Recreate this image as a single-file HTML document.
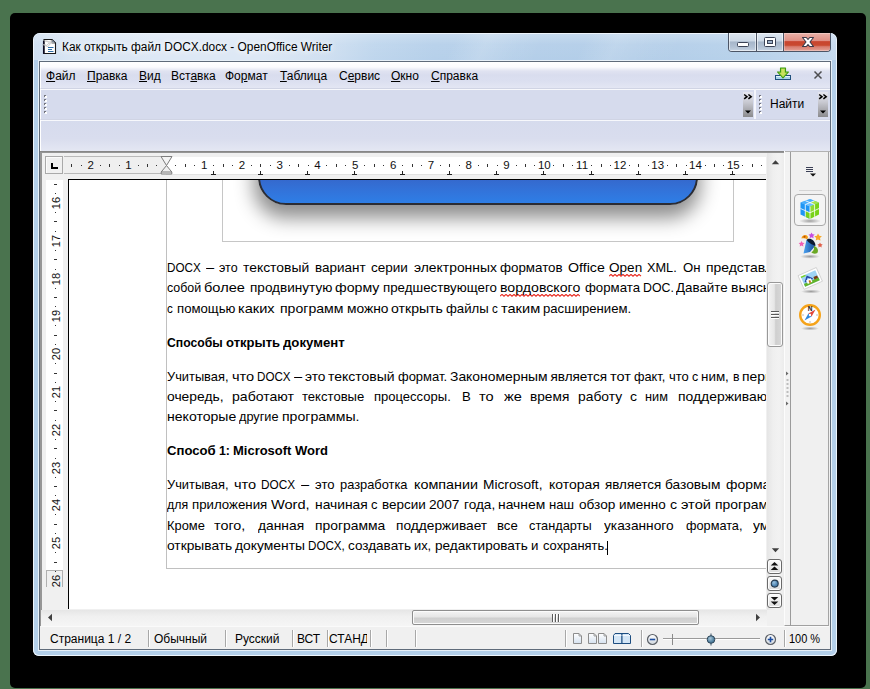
<!DOCTYPE html>
<html lang="ru">
<head>
<meta charset="utf-8">
<title>OpenOffice Writer</title>
<style>
*{box-sizing:border-box;margin:0;padding:0}
html,body{width:870px;height:689px;overflow:hidden}
body{position:relative;background:#4a734e;font-family:"Liberation Sans",sans-serif;font-size:12px;color:#000}
.a{position:absolute}
i{font-style:normal}
#shadow{left:10px;top:13px;width:856px;height:675px;background:#000;border-radius:5px}
#win{left:33px;top:33px;width:804px;height:623px;border-radius:7px 7px 6px 6px;
 background:#b3cfea;
 box-shadow:inset 0 0 0 1px #eef5fc}
#tbar{left:34px;top:34px;width:802px;height:26px;border-radius:6px 6px 0 0;overflow:hidden;
 background:linear-gradient(115deg,rgba(255,255,255,0) 52%,rgba(255,255,255,.16) 56%,rgba(255,255,255,.05) 60%,rgba(255,255,255,0) 63%,rgba(255,255,255,0) 68%,rgba(255,255,255,.14) 72%,rgba(255,255,255,.04) 77%,rgba(255,255,255,0) 80%),
 linear-gradient(90deg,#cfdff1 0,#d8e5f3 36px,#dde8f5 120px,#dde8f5 230px,#d0e0f1 290px,#bfd6ed 340px,#b6d0ea 400px,#b2cde8 600px,#b8d2eb 720px,#c6daef 802px)}
#tbar:after{content:"";position:absolute;left:0;top:0;right:0;bottom:0;background:linear-gradient(180deg,rgba(255,255,255,.25) 0,rgba(255,255,255,.05) 40%,rgba(255,255,255,0) 100%)}
#title{left:62px;top:40px;font-size:12px;line-height:14px;white-space:nowrap;color:#000;text-shadow:0 0 6px #fff,0 0 8px #fff;transform-origin:0 0;transform:scaleX(.99)}
#client{left:39px;top:61px;width:792px;height:589px;background:#f0f0f0;border:1px solid #5f6b7a;box-shadow:0 0 0 1px rgba(236,243,250,.9)}
/* menubar */
#menubar{left:40px;top:62px;width:790px;height:26px;background:linear-gradient(180deg,#ffffff 0,#fbfbfe 5px,#e0e3f1 9px,#d9ddee 13px,#dbdff0 19px,#e3e6f3 26px);border-left:1px solid #fff}
.mi{top:69px;font-size:12px;line-height:14px;white-space:nowrap}
.mi u{text-decoration:underline;text-underline-offset:1px}
#tb1{left:40px;top:88px;width:790px;height:31px;background:#d6dbed;border-top:1px solid #d0d4e4;border-left:1px solid #fff;box-shadow:inset 0 1px 0 #f7f8fc}
#tb2{left:40px;top:119px;width:790px;height:32px;background:linear-gradient(180deg,#d6dbed 0,#d9ddee 60%,#e4e7f3 100%);border-top:1px solid #d0d4e4;border-left:1px solid #fff;box-shadow:inset 0 1px 0 #f7f8fc}
#tbline{left:40px;top:151px;width:744px;height:2px;background:linear-gradient(180deg,#808080,#9c9c9c)}
#tbline2{left:784px;top:151px;width:46px;height:1px;background:#b2b2b2;border-left:1px solid #fff}
/* doc area */
#docarea{left:40px;top:153px;width:744px;height:473px;background:#f0f0f0;border-left:2px solid #969696}
#rcorner{left:45px;top:156px;width:18px;height:18px;border:1px solid #a9a9a9;background:#f0f0f0;box-shadow:inset 1px 1px 0 #fbfbfb}
#rcorner:before{content:"";position:absolute;left:5px;top:6px;width:2px;height:6px;background:#000}
#rcorner:after{content:"";position:absolute;left:5px;top:10px;width:7px;height:2px;background:#000}
#hruler{left:64px;top:156px;width:702px;height:19px;overflow:hidden}
#hruler .white{left:102px;top:1px;width:601px;height:18px;background:#fff;border-bottom:1px solid #e2e2e2}
#hruler .gray{left:0;top:0;width:102px;height:18px;background:#efefef;border-top:1px solid #b9b9b9;border-bottom:1px solid #b9b9b9}
.rn{position:absolute;top:2px;width:20px;text-align:center;font-size:11.5px;line-height:13px;color:#111}
.tk{position:absolute;top:7px;width:1px;height:3px;background:#333}
.dt{position:absolute;top:8px;width:1px;height:1px;background:#333}
.tb{position:absolute;top:14px;width:7px;height:5px}
.tb:before{content:"";position:absolute;left:3px;top:0;width:1px;height:3px;background:#222}
.tb:after{content:"";position:absolute;left:1px;top:3px;width:5px;height:1px;background:#222}
#vruler{left:46px;top:180px;width:17px;height:407px;background:#fff;overflow:hidden}
.vn{position:absolute;left:0px;color:#111;width:20px;height:20px;line-height:20px;text-align:center;font-size:11px;transform:rotate(-90deg)}
.vtk{position:absolute;left:8px;width:3px;height:1px;background:#333}
.vdt{position:absolute;left:9px;width:1px;height:1px;background:#333}
#page{left:68px;top:179px;width:698px;height:430px;background:#fff;border-left:1px solid #000;border-top:1px solid #000;overflow:hidden}
.wd{position:absolute;height:20px;line-height:20px;font-size:13.5px;white-space:nowrap;color:#000;transform-origin:0 50%}
.wd.b{font-weight:bold}
u.w{text-decoration:underline wavy #e02020;text-decoration-thickness:1px;text-underline-offset:2px}

/* doc image */
#frame{left:222px;top:150px;width:512px;height:92px;border:1px solid #c6c6c6}
#shape{left:258px;top:120px;width:440px;height:85px;border-radius:0 0 28px 28px;border:2px solid #2b2c33;
 background:linear-gradient(180deg,#3861c5 0,#3568cc 70%,#3274db 86%,#2e7ee6 100%);
 box-shadow:-1px 10px 19px 3px rgba(0,0,0,.45)}
#txb-l{left:166px;top:180px;width:1px;height:388px;background:#c0c0c0}
#txb-b{left:166px;top:568px;width:600px;height:1px;background:#c0c0c0}
#caret{left:607px;top:541px;width:1px;height:14px;background:#000}
/* scrollbars */
#vsb{left:767px;top:153px;width:17px;height:457px;background:linear-gradient(90deg,#e5e5e5 0,#efefef 35%,#f2f2f2 70%,#ececec 100%)}
#vthumb{left:767px;top:282px;width:16px;height:65px;border:1px solid #989898;border-radius:3px;
 background:linear-gradient(90deg,#f4f4f4 0,#e6e6e6 45%,#cfcfcf 55%,#d8d8d8 100%);box-shadow:inset 0 0 0 1px #fbfbfb}
.grip-h{left:771px;width:8px;height:1px;background:#5a5a5a;box-shadow:0 1px 0 #fff}
#hsb{left:41px;top:610px;width:726px;height:16px;background:linear-gradient(180deg,#e6e6e6 0,#f0f0f0 40%,#f5f5f5 100%)}
#hthumb{left:412px;top:610px;width:287px;height:15px;border:1px solid #8e8e8e;border-radius:2px;
 background:linear-gradient(180deg,#f4f4f4 0,#e6e6e6 45%,#cfcfcf 55%,#d8d8d8 100%);box-shadow:inset 0 0 0 1px #fbfbfb}
.grip-v{top:614px;width:1px;height:8px;background:#5a5a5a;box-shadow:1px 0 0 #fff}
.navb{left:767px;width:15px;height:15px;border:1px solid #6a6a6a;border-radius:3px;background:linear-gradient(180deg,#fbfbfb,#dcdcdc);box-shadow:inset 0 0 0 1px #fdfdfd}
/* sidebar */
#split{left:784px;top:152px;width:6px;height:474px;background:#f2f2f2;border-left:1px solid #fcfcfc;border-bottom:1px solid #a0a0a0}
#sbline{left:790px;top:152px;width:1px;height:474px;background:#9b9b9b}
#sidebar{left:791px;top:152px;width:38px;height:474px;background:#f0f0f0;border-right:1px solid #a4a4a4;border-bottom:1px solid #a0a0a0}
#sbsep{left:799px;top:190px;width:23px;height:1px;background:#d4d4d4}
#sbbtn{left:794px;top:194px;width:32px;height:32px;border:1px solid #a9a9a9;border-radius:4px;background:#f4f4f4}
/* status bar */
#status{left:41px;top:626px;width:788px;height:23px;background:#f0f0f0;border-top:1px solid #fafafa}
.st{top:632px;font-size:12px;line-height:14px;white-space:nowrap;color:#000}
.ss{top:630px;width:1px;height:17px;background:#a8a8a8;box-shadow:1px 0 0 #fff}

/* titlebar buttons */
#capbtns{left:728px;top:33px;width:103px;height:19px;border:1px solid #4c5566;border-top:none;border-radius:0 0 4px 4px;overflow:hidden;background:#c8d4e2}
.cb{top:0;height:18px;background:linear-gradient(180deg,#dde6f0 0,#cdd9e6 44%,#a6b6ca 50%,#b4c3d5 80%,#c6d3e2 100%);box-shadow:inset 0 0 0 1px rgba(255,255,255,.55)}
#cb-close{background:linear-gradient(180deg,#eab1a8 0,#df9085 42%,#c8452f 48%,#c9492f 68%,#d77c6e 76%,#e4a398 100%);box-shadow:inset 0 0 0 1px rgba(255,255,255,.3)}
.cbs{top:0;width:1px;height:18px;background:#4c5566}
/* toolbar bits */
.chev{top:92px;width:10px;height:25px;background:linear-gradient(180deg,#e6e7f0 0,#c9cad2 40%,#8b8b8d 100%)}
.grip{width:4px;height:20px;top:95px}
.grip i{position:absolute;left:1px;width:2px;height:2px;background:#fff;box-shadow:-1px -1px 0 #75767f}
#find{left:770px;top:96.5px;font-size:12px;line-height:14px;white-space:nowrap}
#tbsep{left:754px;top:89px;width:2px;height:30px;background:#f4f5fb}
</style>
</head>
<body>
<div id="shadow" class="a"></div>
<div id="win" class="a"></div>
<div id="tbar" class="a"></div>
<div id="title" class="a">Как открыть файл DOCX.docx - OpenOffice Writer</div>
<div id="client" class="a"></div>
<div id="menubar" class="a"></div>
<div class="a mi" style="left:46px"><u>Ф</u>айл</div>
<div class="a mi" style="left:87px"><u>П</u>равка</div>
<div class="a mi" style="left:139px"><u>В</u>ид</div>
<div class="a mi" style="left:171px">Вст<u>а</u>вка</div>
<div class="a mi" style="left:225px">Фо<u>р</u>мат</div>
<div class="a mi" style="left:280px"><u>Т</u>аблица</div>
<div class="a mi" style="left:339px">С<u>е</u>рвис</div>
<div class="a mi" style="left:391px"><u>О</u>кно</div>
<div class="a mi" style="left:431px"><u>С</u>правка</div>
<div id="tb1" class="a"></div>
<div id="tb2" class="a"></div>
<div id="tbline" class="a"></div><div id="tbline2" class="a"></div>

<!-- title icon -->
<svg class="a" style="left:42px;top:38px" width="16" height="17" viewBox="0 0 16 17">
 <path d="M2 1.500 H10 L13.500 5 V15.500 H2 Z" fill="#fff" stroke="#1a1a1a" stroke-width="1.100"/>
 <path d="M1.700 3 V15.900" stroke="#0a0a24" stroke-width="1.500"/>
 <path d="M10 1.500 L13.500 5 H10 Z" fill="#9bb7d4" stroke="#222" stroke-width=".7"/>
 <path d="M6 9.500 H11.500 M6 11.500 H10 M6 13.500 H11.500" stroke="#2f6ea5" stroke-width="1"/>
 <path d="M0.500 6.800 C2.500 6 3.800 7 4.800 7.400 C6 5 9 4 12.300 4.500 C9 5 7.300 6.300 5.800 8.800 C4.300 7.800 2.500 7.300 0.500 6.800 Z" fill="#f6f6f6" stroke="#9a9a9a" stroke-width=".45"/>
 <path d="M2.500 3 C4.300 2.500 6 3.200 7 3.800 C8 2.800 9.300 2.500 10.800 2.700 C9.500 3 8.400 3.800 7.600 4.800 C6 3.800 4.300 3.200 2.500 3 Z" fill="#f6f6f6" stroke="#a5a5a5" stroke-width=".4"/>
</svg>
<!-- caption buttons -->
<div id="capbtns" class="a">
 <div class="a cb" style="left:0;width:27px"></div>
 <div class="a cbs" style="left:27px"></div>
 <div class="a cb" style="left:28px;width:26px"></div>
 <div class="a cbs" style="left:54px"></div>
 <div id="cb-close" class="a cb" style="left:55px;width:47px"></div>
 <svg class="a" style="left:0;top:0" width="102" height="18" viewBox="0 0 102 18">
  <rect x="8.5" y="9.5" width="11" height="4" rx="1" fill="#fff" stroke="#3b4356" stroke-width="1"/>
  <rect x="35.5" y="4.5" width="11" height="9" rx="1" fill="#fff" stroke="#3b4356" stroke-width="1"/>
  <rect x="38.5" y="7.5" width="5" height="3" fill="#9db0c8" stroke="#3b4356" stroke-width="1"/>
  <path d="M73.500 4.500 h3.800 l1.700 2 l1.700 -2 h3.800 l-3.500 4.500 l3.500 4.500 h-3.800 l-1.700 -2 l-1.700 2 h-3.800 l3.500 -4.500 Z" fill="#fff" stroke="#3a3a4a" stroke-width="1.100" stroke-linejoin="round"/>
 </svg>
</div>
<!-- menubar right icons -->
<svg class="a" style="left:774px;top:67px" width="18" height="14" viewBox="0 0 18 14">
 <rect x="1.5" y="8.5" width="15" height="4" fill="#a9d3ea" stroke="#1f4f7c" stroke-width="1"/>
 <rect x="2" y="9" width="14" height="1" fill="#e6f3fa"/>
 <path d="M6.5 1 h5 v4 h3 l-5.5 6 l-5.5 -6 h3 Z" fill="#a5d63f" stroke="#3c9a12" stroke-width="1.1" stroke-linejoin="round"/>
 <path d="M7.5 2 h3 v4 h1.6 l-3.1 3.4 l-3.1 -3.4 h1.6 Z" fill="#d2e46a" opacity=".8"/>
</svg>
<svg class="a" style="left:813px;top:70px" width="10" height="10" viewBox="0 0 10 10"><path d="M1.500 1.500 L8.500 8.500 M8.500 1.500 L1.500 8.500" stroke="#4d4d50" stroke-width="1.500"/></svg>
<!-- toolbar 1 -->
<div class="a grip" style="left:44px"><i style="top:1px"></i><i style="top:5px"></i><i style="top:9px"></i><i style="top:13px"></i><i style="top:17px"></i></div>
<div class="a chev" style="left:743px"></div>
<div class="a chev" style="left:818px"></div>
<svg class="a" style="left:743px;top:92px" width="10" height="25" viewBox="0 0 10 25"><path d="M1.2 2.5 L4 4.7 L1.2 6.9 M5.4 2.5 L8.2 4.7 L5.4 6.9" fill="none" stroke="#000" stroke-width="1.5"/><path d="M2 18.5 H8 L5 21.5 Z" fill="#000"/></svg>
<svg class="a" style="left:818px;top:92px" width="10" height="25" viewBox="0 0 10 25"><path d="M1.2 2.5 L4 4.7 L1.2 6.9 M5.4 2.5 L8.2 4.7 L5.4 6.9" fill="none" stroke="#000" stroke-width="1.5"/><path d="M2 18.5 H8 L5 21.5 Z" fill="#000"/></svg>
<div id="tbsep" class="a"></div>
<div class="a grip" style="left:759px"><i style="top:1px"></i><i style="top:5px"></i><i style="top:9px"></i><i style="top:13px"></i><i style="top:17px"></i></div>
<div id="find" class="a">Найти</div>
<div id="docarea" class="a"></div>
<div id="rcorner" class="a"></div>
<div id="hruler" class="a"><div class="a gray"></div><div class="a white"></div>
<div class="a" style="left:-64px;top:1px;width:870px;height:18px">
<i class="tk" style="left:71.3px"></i>
<i class="dt" style="left:80.8px"></i>
<span class="rn" style="left:80.7px">2</span>
<i class="dt" style="left:99.7px"></i>
<i class="tk" style="left:109.1px"></i>
<i class="dt" style="left:118.6px"></i>
<span class="rn" style="left:118.5px">1</span>
<i class="dt" style="left:137.5px"></i>
<i class="tk" style="left:146.9px"></i>
<i class="dt" style="left:156.4px"></i>
<i class="dt" style="left:175.2px"></i>
<i class="tk" style="left:184.7px"></i>
<i class="dt" style="left:194.2px"></i>
<span class="rn" style="left:194.1px">1</span>
<i class="dt" style="left:213.1px"></i>
<i class="tk" style="left:222.5px"></i>
<i class="dt" style="left:231.9px"></i>
<span class="rn" style="left:231.9px">2</span>
<i class="dt" style="left:250.9px"></i>
<i class="tk" style="left:260.3px"></i>
<i class="dt" style="left:269.8px"></i>
<span class="rn" style="left:269.7px">3</span>
<i class="dt" style="left:288.6px"></i>
<i class="tk" style="left:298.1px"></i>
<i class="dt" style="left:307.6px"></i>
<span class="rn" style="left:307.5px">4</span>
<i class="dt" style="left:326.4px"></i>
<i class="tk" style="left:335.9px"></i>
<i class="dt" style="left:345.4px"></i>
<span class="rn" style="left:345.3px">5</span>
<i class="dt" style="left:364.2px"></i>
<i class="tk" style="left:373.7px"></i>
<i class="dt" style="left:383.1px"></i>
<span class="rn" style="left:383.1px">6</span>
<i class="dt" style="left:402.0px"></i>
<i class="tk" style="left:411.5px"></i>
<i class="dt" style="left:420.9px"></i>
<span class="rn" style="left:420.9px">7</span>
<i class="dt" style="left:439.8px"></i>
<i class="tk" style="left:449.3px"></i>
<i class="dt" style="left:458.8px"></i>
<span class="rn" style="left:458.7px">8</span>
<i class="dt" style="left:477.6px"></i>
<i class="tk" style="left:487.1px"></i>
<i class="dt" style="left:496.6px"></i>
<span class="rn" style="left:496.5px">9</span>
<i class="dt" style="left:515.5px"></i>
<i class="tk" style="left:524.9px"></i>
<i class="dt" style="left:534.3px"></i>
<span class="rn" style="left:534.3px">10</span>
<i class="dt" style="left:553.2px"></i>
<i class="tk" style="left:562.7px"></i>
<i class="dt" style="left:572.1px"></i>
<span class="rn" style="left:572.1px">11</span>
<i class="dt" style="left:591.0px"></i>
<i class="tk" style="left:600.5px"></i>
<i class="dt" style="left:610.0px"></i>
<span class="rn" style="left:609.9px">12</span>
<i class="dt" style="left:628.8px"></i>
<i class="tk" style="left:638.3px"></i>
<i class="dt" style="left:647.8px"></i>
<span class="rn" style="left:647.7px">13</span>
<i class="dt" style="left:666.6px"></i>
<i class="tk" style="left:676.1px"></i>
<i class="dt" style="left:685.5px"></i>
<span class="rn" style="left:685.5px">14</span>
<i class="dt" style="left:704.5px"></i>
<i class="tk" style="left:713.9px"></i>
<i class="dt" style="left:723.3px"></i>
<span class="rn" style="left:723.3px">15</span>
<i class="dt" style="left:742.2px"></i>
<i class="tk" style="left:751.7px"></i>
<i class="dt" style="left:761.1px"></i>
<i class="tb" style="left:209.6px"></i>
<i class="tb" style="left:256.8px"></i>
<i class="tb" style="left:304.1px"></i>
<i class="tb" style="left:351.3px"></i>
<i class="tb" style="left:398.6px"></i>
<i class="tb" style="left:445.8px"></i>
<i class="tb" style="left:493.1px"></i>
<i class="tb" style="left:540.3px"></i>
<i class="tb" style="left:587.5px"></i>
<i class="tb" style="left:634.8px"></i>
<i class="tb" style="left:682.0px"></i>
<i class="tb" style="left:729.3px"></i>
</div></div>
<svg class="a" style="left:160px;top:155px" width="13" height="20" viewBox="0 0 13 20">
 <path d="M1 1.5 H12 L6.5 10.5 Z" fill="#f4f4f4" stroke="#7d7d7d" stroke-width="1"/>
 <path d="M6.5 10.5 L11.8 17 V19 H1.200 V17 Z" fill="#f0f0f0" stroke="#7d7d7d" stroke-width="1"/>
 <path d="M1.200 17 H11.800" stroke="#7d7d7d" stroke-width="1"/>
</svg>
<div id="vruler" class="a"><div class="a" style="left:0;top:390px;width:17px;height:17px;background:#f0f0f0;border:1px solid #b0b0b0;border-bottom:none"></div>
<div class="a" style="left:0;top:-180px;width:17px;height:689px">
<i class="vtk" style="top:183.6px"></i>
<i class="vdt" style="top:193.1px"></i>
<span class="vn" style="top:193.0px">16</span>
<i class="vdt" style="top:211.9px"></i>
<i class="vtk" style="top:221.4px"></i>
<i class="vdt" style="top:230.8px"></i>
<span class="vn" style="top:230.8px">17</span>
<i class="vdt" style="top:249.8px"></i>
<i class="vtk" style="top:259.2px"></i>
<i class="vdt" style="top:268.6px"></i>
<span class="vn" style="top:268.6px">18</span>
<i class="vdt" style="top:287.6px"></i>
<i class="vtk" style="top:297.0px"></i>
<i class="vdt" style="top:306.4px"></i>
<span class="vn" style="top:306.4px">19</span>
<i class="vdt" style="top:325.4px"></i>
<i class="vtk" style="top:334.8px"></i>
<i class="vdt" style="top:344.2px"></i>
<span class="vn" style="top:344.2px">20</span>
<i class="vdt" style="top:363.1px"></i>
<i class="vtk" style="top:372.6px"></i>
<i class="vdt" style="top:382.0px"></i>
<span class="vn" style="top:382.0px">21</span>
<i class="vdt" style="top:400.9px"></i>
<i class="vtk" style="top:410.4px"></i>
<i class="vdt" style="top:419.9px"></i>
<span class="vn" style="top:419.8px">22</span>
<i class="vdt" style="top:438.8px"></i>
<i class="vtk" style="top:448.2px"></i>
<i class="vdt" style="top:457.6px"></i>
<span class="vn" style="top:457.6px">23</span>
<i class="vdt" style="top:476.5px"></i>
<i class="vtk" style="top:486.0px"></i>
<i class="vdt" style="top:495.4px"></i>
<span class="vn" style="top:495.4px">24</span>
<i class="vdt" style="top:514.3px"></i>
<i class="vtk" style="top:523.8px"></i>
<i class="vdt" style="top:533.2px"></i>
<span class="vn" style="top:533.2px">25</span>
<i class="vdt" style="top:552.1px"></i>
<i class="vtk" style="top:561.6px"></i>
<i class="vdt" style="top:571.0px"></i>
<span class="vn" style="top:571.0px">26</span>
</div></div>
<div id="page" class="a">
<div class="a" style="left:-69px;top:-180px;width:870px;height:689px">
<span class="wd" style="left:166.9px;top:258.22px;transform:scaleX(0.864)">DOCX</span>
<span class="wd" style="left:205.9px;top:258.22px;transform:scaleX(1.080)">–</span>
<span class="wd" style="left:218.6px;top:258.22px;transform:scaleX(0.924)">это</span>
<span class="wd" style="left:242.7px;top:258.22px;transform:scaleX(1.029)">текстовый</span>
<span class="wd" style="left:315.2px;top:258.22px;transform:scaleX(0.997)">вариант</span>
<span class="wd" style="left:371.3px;top:258.22px;transform:scaleX(1.001)">серии</span>
<span class="wd" style="left:413.6px;top:258.22px;transform:scaleX(1.028)">электронных</span>
<span class="wd" style="left:500.0px;top:258.22px;transform:scaleX(0.989)">форматов</span>
<span class="wd" style="left:568.3px;top:258.22px;transform:scaleX(1.051)">Office</span>
<svg class="a" style="left:608.6px;top:274.0px" width="33" height="3" viewBox="0 0 33 3"><polyline points="0,2.2 2,0.4 4,2.2 6,0.4 8,2.2 10,0.4 12,2.2 14,0.4 16,2.2 18,0.4 20,2.2 22,0.4 24,2.2 26,0.4 28,2.2 30,0.4 32,2.2" fill="none" stroke="#e8281e" stroke-width="1.1"/></svg>
<span class="wd" style="left:608.6px;top:258.22px;transform:scaleX(1.005)">Open</span>
<span class="wd" style="left:646.9px;top:258.22px;transform:scaleX(0.942)">XML.</span>
<span class="wd" style="left:683.3px;top:258.22px;transform:scaleX(0.974)">Он</span>
<span class="wd" style="left:706.4px;top:258.22px;transform:scaleX(1.030)">представляет</span>
<span class="wd" style="left:166.9px;top:278.42px;transform:scaleX(0.919)">собой</span>
<span class="wd" style="left:204.1px;top:278.42px;transform:scaleX(1.080)">более</span>
<span class="wd" style="left:249.6px;top:278.42px;transform:scaleX(1.004)">продвинутую</span>
<span class="wd" style="left:335.2px;top:278.42px;transform:scaleX(1.049)">форму</span>
<span class="wd" style="left:383.4px;top:278.42px;transform:scaleX(0.986)">предшествующего</span>
<svg class="a" style="left:500.3px;top:294.2px" width="80" height="3" viewBox="0 0 80 3"><polyline points="0,2.2 2,0.4 4,2.2 6,0.4 8,2.2 10,0.4 12,2.2 14,0.4 16,2.2 18,0.4 20,2.2 22,0.4 24,2.2 26,0.4 28,2.2 30,0.4 32,2.2 34,0.4 36,2.2 38,0.4 40,2.2 42,0.4 44,2.2 46,0.4 48,2.2 50,0.4 52,2.2 54,0.4 56,2.2 58,0.4 60,2.2 62,0.4 64,2.2 66,0.4 68,2.2 70,0.4 72,2.2 74,0.4 76,2.2 78,0.4 80,2.2" fill="none" stroke="#e8281e" stroke-width="1.1"/></svg>
<span class="wd" style="left:500.3px;top:278.42px;transform:scaleX(1.048)">вордовского</span>
<span class="wd" style="left:584.5px;top:278.42px;transform:scaleX(0.979)">формата</span>
<span class="wd" style="left:642.5px;top:278.42px;transform:scaleX(0.913)">DOC.</span>
<span class="wd" style="left:676.3px;top:278.42px;transform:scaleX(0.989)">Давайте</span>
<span class="wd" style="left:731.0px;top:278.42px;transform:scaleX(1.030)">выясним,</span>
<span class="wd" style="left:166.9px;top:298.62px;transform:scaleX(0.859)">с</span>
<span class="wd" style="left:176.5px;top:298.62px;transform:scaleX(0.975)">помощью</span>
<span class="wd" style="left:237.9px;top:298.62px;transform:scaleX(1.080)">каких</span>
<span class="wd" style="left:280.0px;top:298.62px;transform:scaleX(1.042)">программ</span>
<span class="wd" style="left:346.5px;top:298.62px;transform:scaleX(1.021)">можно</span>
<span class="wd" style="left:391.0px;top:298.62px;transform:scaleX(1.044)">открыть</span>
<span class="wd" style="left:445.9px;top:298.62px;transform:scaleX(0.978)">файлы</span>
<span class="wd" style="left:491.7px;top:298.62px;transform:scaleX(0.860)">с</span>
<span class="wd" style="left:500.5px;top:298.62px;transform:scaleX(1.080)">таким</span>
<span class="wd" style="left:543.4px;top:298.62px;transform:scaleX(0.972)">расширением.</span>
<span class="wd b" style="left:166.9px;top:332.62px;transform:scaleX(0.903)">Способы</span>
<span class="wd b" style="left:225.5px;top:332.62px;transform:scaleX(0.967)">открыть</span>
<span class="wd b" style="left:282.7px;top:332.62px;transform:scaleX(0.977)">документ</span>
<span class="wd" style="left:166.9px;top:366.62px;transform:scaleX(0.951)">Учитывая,</span>
<span class="wd" style="left:231.7px;top:366.62px;transform:scaleX(1.079)">что</span>
<span class="wd" style="left:256.9px;top:366.62px;transform:scaleX(0.860)">DOCX</span>
<span class="wd" style="left:293.5px;top:366.62px;transform:scaleX(1.080)">–</span>
<span class="wd" style="left:304.8px;top:366.62px;transform:scaleX(1.018)">это</span>
<span class="wd" style="left:328.3px;top:366.62px;transform:scaleX(1.036)">текстовый</span>
<span class="wd" style="left:397.9px;top:366.62px;transform:scaleX(0.960)">формат.</span>
<span class="wd" style="left:449.9px;top:366.62px;transform:scaleX(1.028)">Закономерным</span>
<span class="wd" style="left:550.5px;top:366.62px;transform:scaleX(1.000)">является</span>
<span class="wd" style="left:610.0px;top:366.62px;transform:scaleX(1.075)">тот</span>
<span class="wd" style="left:633.9px;top:366.62px;transform:scaleX(0.945)">факт,</span>
<span class="wd" style="left:668.8px;top:366.62px;transform:scaleX(0.962)">что</span>
<span class="wd" style="left:691.6px;top:366.62px;transform:scaleX(0.919)">с</span>
<span class="wd" style="left:701.1px;top:366.62px;transform:scaleX(0.992)">ним,</span>
<span class="wd" style="left:732.5px;top:366.62px;transform:scaleX(0.906)">в</span>
<span class="wd" style="left:742.0px;top:366.62px;transform:scaleX(1.030)">первую</span>
<span class="wd" style="left:166.9px;top:386.82px;transform:scaleX(1.025)">очередь,</span>
<span class="wd" style="left:232.4px;top:386.82px;transform:scaleX(1.042)">работают</span>
<span class="wd" style="left:302.4px;top:386.82px;transform:scaleX(0.969)">текстовые</span>
<span class="wd" style="left:373.8px;top:386.82px;transform:scaleX(0.965)">процессоры.</span>
<span class="wd" style="left:462.1px;top:386.82px;transform:scaleX(0.976)">В</span>
<span class="wd" style="left:479.1px;top:386.82px;transform:scaleX(1.080)">то</span>
<span class="wd" style="left:503.8px;top:386.82px;transform:scaleX(1.080)">же</span>
<span class="wd" style="left:530.3px;top:386.82px;transform:scaleX(1.013)">время</span>
<span class="wd" style="left:577.8px;top:386.82px;transform:scaleX(1.024)">работу</span>
<span class="wd" style="left:630.1px;top:386.82px;transform:scaleX(1.037)">с</span>
<span class="wd" style="left:645.3px;top:386.82px;transform:scaleX(0.943)">ним</span>
<span class="wd" style="left:677.5px;top:386.82px;transform:scaleX(1.030)">поддерживают</span>
<span class="wd" style="left:166.9px;top:407.02px;transform:scaleX(1.041)">некоторые</span>
<span class="wd" style="left:239.1px;top:407.02px;transform:scaleX(0.941)">другие</span>
<span class="wd" style="left:281.6px;top:407.02px;transform:scaleX(1.043)">программы.</span>
<span class="wd b" style="left:166.9px;top:441.02px;transform:scaleX(0.972)">Способ</span>
<span class="wd b" style="left:218.6px;top:441.02px;transform:scaleX(0.915)">1:</span>
<span class="wd b" style="left:233.4px;top:441.02px;transform:scaleX(0.961)">Microsoft</span>
<span class="wd b" style="left:294.8px;top:441.02px;transform:scaleX(0.964)">Word</span>
<span class="wd" style="left:166.9px;top:475.22px;transform:scaleX(0.951)">Учитывая,</span>
<span class="wd" style="left:234.0px;top:475.22px;transform:scaleX(1.079)">что</span>
<span class="wd" style="left:261.0px;top:475.22px;transform:scaleX(0.874)">DOCX</span>
<span class="wd" style="left:300.7px;top:475.22px;transform:scaleX(1.080)">–</span>
<span class="wd" style="left:315.2px;top:475.22px;transform:scaleX(0.968)">это</span>
<span class="wd" style="left:339.6px;top:475.22px;transform:scaleX(0.952)">разработка</span>
<span class="wd" style="left:413.6px;top:475.22px;transform:scaleX(1.063)">компании</span>
<span class="wd" style="left:483.2px;top:475.22px;transform:scaleX(1.017)">Microsoft,</span>
<span class="wd" style="left:548.7px;top:475.22px;transform:scaleX(1.034)">которая</span>
<span class="wd" style="left:604.7px;top:475.22px;transform:scaleX(0.994)">является</span>
<span class="wd" style="left:665.1px;top:475.22px;transform:scaleX(1.017)">базовым</span>
<span class="wd" style="left:725.5px;top:475.22px;transform:scaleX(1.030)">форматом</span>
<span class="wd" style="left:166.5px;top:495.42px;transform:scaleX(0.914)">для</span>
<span class="wd" style="left:191.6px;top:495.42px;transform:scaleX(0.983)">приложения</span>
<span class="wd" style="left:270.5px;top:495.42px;transform:scaleX(1.080)">Word,</span>
<span class="wd" style="left:314.5px;top:495.42px;transform:scaleX(1.023)">начиная</span>
<span class="wd" style="left:371.3px;top:495.42px;transform:scaleX(0.963)">с</span>
<span class="wd" style="left:381.8px;top:495.42px;transform:scaleX(0.998)">версии</span>
<span class="wd" style="left:429.4px;top:495.42px;transform:scaleX(1.015)">2007</span>
<span class="wd" style="left:463.9px;top:495.42px;transform:scaleX(1.007)">года,</span>
<span class="wd" style="left:498.4px;top:495.42px;transform:scaleX(1.027)">начнем</span>
<span class="wd" style="left:549.3px;top:495.42px;transform:scaleX(0.973)">наш</span>
<span class="wd" style="left:579.0px;top:495.42px;transform:scaleX(1.011)">обзор</span>
<span class="wd" style="left:619.4px;top:495.42px;transform:scaleX(1.001)">именно</span>
<span class="wd" style="left:669.6px;top:495.42px;transform:scaleX(1.052)">с</span>
<span class="wd" style="left:680.7px;top:495.42px;transform:scaleX(1.080)">этой</span>
<span class="wd" style="left:715.1px;top:495.42px;transform:scaleX(1.030)">программы.</span>
<span class="wd" style="left:166.9px;top:515.62px;transform:scaleX(0.953)">Кроме</span>
<span class="wd" style="left:213.8px;top:515.62px;transform:scaleX(1.063)">того,</span>
<span class="wd" style="left:257.6px;top:515.62px;transform:scaleX(1.022)">данная</span>
<span class="wd" style="left:314.5px;top:515.62px;transform:scaleX(1.027)">программа</span>
<span class="wd" style="left:395.9px;top:515.62px;transform:scaleX(1.017)">поддерживает</span>
<span class="wd" style="left:497.2px;top:515.62px;transform:scaleX(0.977)">все</span>
<span class="wd" style="left:528.9px;top:515.62px;transform:scaleX(0.945)">стандарты</span>
<span class="wd" style="left:604.0px;top:515.62px;transform:scaleX(1.015)">указанного</span>
<span class="wd" style="left:685.6px;top:515.62px;transform:scaleX(0.943)">формата,</span>
<span class="wd" style="left:753.3px;top:515.62px;transform:scaleX(1.030)">умеет</span>
<span class="wd" style="left:166.9px;top:535.82px;transform:scaleX(1.021)">открывать</span>
<span class="wd" style="left:235.2px;top:535.82px;transform:scaleX(1.028)">документы</span>
<span class="wd" style="left:308.3px;top:535.82px;transform:scaleX(0.861)">DOCX,</span>
<span class="wd" style="left:348.3px;top:535.82px;transform:scaleX(1.002)">создавать</span>
<span class="wd" style="left:414.4px;top:535.82px;transform:scaleX(0.953)">их,</span>
<span class="wd" style="left:434.8px;top:535.82px;transform:scaleX(1.006)">редактировать</span>
<span class="wd" style="left:530.7px;top:535.82px;transform:scaleX(0.981)">и</span>
<span class="wd" style="left:542.6px;top:535.82px;transform:scaleX(0.956)">сохранять.</span>
</div>
</div>

<!-- image frame + shape (clipped in page) -->
<div class="a" style="left:69px;top:180px;width:698px;height:430px;overflow:hidden">
 <div class="a" style="left:-69px;top:-180px;width:870px;height:689px">
  <div id="frame" class="a"></div>
  <div id="shape" class="a"></div>
  <div id="txb-l" class="a"></div>
  <div id="txb-b" class="a"></div>
  <div id="caret" class="a"></div>
 </div>
</div>
<!-- scrollbars -->
<div id="vsb" class="a"></div>
<svg class="a" style="left:771px;top:159px" width="9" height="6" viewBox="0 0 9 6"><path d="M0.8 5.2 L4.500 1.200 L8.200 5.200 Z" fill="#404040"/></svg>
<div id="vthumb" class="a"></div>
<div class="a grip-h" style="top:311px"></div><div class="a grip-h" style="top:314px"></div><div class="a grip-h" style="top:317px"></div>
<svg class="a" style="left:771px;top:547px" width="9" height="6" viewBox="0 0 9 6"><path d="M0.8 1.200 L8.200 1.200 L4.500 5.200 Z" fill="#404040"/></svg>
<div class="a navb" style="top:559px"></div>
<div class="a navb" style="top:576px"></div>
<div class="a navb" style="top:593px"></div>
<svg class="a" style="left:767px;top:559px" width="15" height="15" viewBox="0 0 15 15"><path d="M7.5 3 L11.300 6.600 L3.700 6.600 Z M7.500 7.400 L11.300 11 L3.700 11 Z" fill="#111"/></svg>
<svg class="a" style="left:767px;top:576px" width="15" height="15" viewBox="0 0 15 15"><defs><radialGradient id="nb" cx=".4" cy=".35"><stop offset="0" stop-color="#9cc3df"/><stop offset="1" stop-color="#477fae"/></radialGradient></defs><circle cx="7.700" cy="7.600" r="3.500" fill="url(#nb)" stroke="#24384c" stroke-width="1.100"/></svg>
<svg class="a" style="left:767px;top:593px" width="15" height="15" viewBox="0 0 15 15"><path d="M3.700 4 L11.300 4 L7.500 7.600 Z M3.700 8.400 L11.300 8.400 L7.500 12 Z" fill="#111"/></svg>
<div id="hsb" class="a"></div>
<svg class="a" style="left:47px;top:613px" width="6" height="9" viewBox="0 0 6 9"><path d="M5 0.800 L5 8.200 L1 4.500 Z" fill="#404040"/></svg>
<svg class="a" style="left:755px;top:613px" width="6" height="9" viewBox="0 0 6 9"><path d="M1 0.800 L1 8.200 L5 4.500 Z" fill="#404040"/></svg>
<div id="hthumb" class="a"></div>
<div class="a grip-v" style="left:552px"></div><div class="a grip-v" style="left:555px"></div><div class="a grip-v" style="left:558px"></div>
<!-- sidebar -->
<div id="split" class="a"></div>
<div id="sbline" class="a"></div>
<div id="sidebar" class="a"></div>
<div id="sbsep" class="a"></div>
<div id="sbbtn" class="a"></div>

<!-- sidebar menu icon -->
<svg class="a" style="left:805px;top:166px" width="12" height="12" viewBox="0 0 12 12">
 <path d="M1 1.5 H8 M1 3.5 H8 M1 5.5 H8" stroke="#3a3f55" stroke-width="1"/>
 <path d="M5 7.5 H11 L8 10.5 Z" fill="#111"/>
</svg>
<!-- cube -->
<svg class="a" style="left:797px;top:197px" width="26" height="27" viewBox="0 0 26 27">
 <defs><radialGradient id="sh1"><stop offset="0" stop-color="#000" stop-opacity=".35"/><stop offset="1" stop-color="#000" stop-opacity="0"/></radialGradient></defs>
 <ellipse cx="13" cy="24" rx="11" ry="2.5" fill="url(#sh1)"/>
 <!-- top face -->
 <path d="M13 2 L22 5.5 L13 9.5 L3.5 5.5 Z" fill="#6ec1ff"/>
 <path d="M13 2 L17.5 3.8 L8.3 7.5 L3.5 5.5 Z" fill="#49aefc"/>
 <path d="M17.5 3.8 L22 5.5 L17.6 7.5 L13 5.7 Z" fill="#a4e34a"/>
 <!-- left face -->
 <path d="M3.5 5.5 L13 9.5 L13 22 L3.5 17.5 Z" fill="#1e96f5"/>
 <path d="M8.3 13.8 L13 15.8 L13 22 L8.3 19.8 Z" fill="#7ad11c"/>
 <!-- right face -->
 <path d="M13 9.5 L22 5.5 L22 17.5 L13 22 Z" fill="#79d219"/>
 <path d="M13 9.5 L17.6 7.5 L17.6 13.6 L13 15.8 Z" fill="#8fdc35"/>
 <!-- grid lines -->
 <path d="M3.5 11.5 L13 15.8 L22 11.5 M8.3 7.5 L8.3 19.8 M17.6 7.5 L17.6 19.8 M13 9.5 V22 M8.3 7.5 L17.5 3.8 M17.6 7.5 L8.5 3.8" stroke="#fff" stroke-width=".9" fill="none" opacity=".9"/>
</svg>
<!-- styles (stars) -->
<svg class="a" style="left:797px;top:231px" width="27" height="28" viewBox="0 0 27 28">
 <defs><linearGradient id="cone" x1="0" y1="0" x2="1" y2="0"><stop offset="0" stop-color="#4ba3f2"/><stop offset="1" stop-color="#174a94"/></linearGradient></defs>
 <ellipse cx="13" cy="25.5" rx="10" ry="2.200" fill="url(#sh1)"/>
 <path d="M9.500 9 L18.500 14.500 L13 21 L6.500 22.500 Z" fill="url(#cone)"/>
 <path d="M9.500 9 C11.500 6 18 8 18.500 14.500 C16 14.500 12 12 9.500 9 Z" fill="#0c1a30"/>
 <path d="M16.500 15 C20.500 15.500 22 19.500 20.300 22 C18.300 23.300 15.500 22.800 14.300 21.300 C16.500 20.300 17.800 17.800 16.500 15 Z" fill="#6aa823"/>
 <path d="M4.500 7.500 C4.500 4.500 8.500 3 10.500 5 C11.300 6.300 10.800 7.600 10 8.300 C8.500 7 6.500 7 4.500 7.500 Z" fill="#f39a12"/>
 <circle cx="7.500" cy="5.800" r="1" fill="#b4500a"/>
 <path d="M14.500 1.500 l1.100 1.800 l2.100 .3 l-1.500 1.500 l.4 2.100 l-2.100 -1 l-1.900 1 l.4 -2.100 l-1.500 -1.500 l2.100 -.3 Z" fill="#c64de0"/>
 <path d="M21 2.500 l1.300 2.300 l2.600 .4 l-1.900 1.800 l.5 2.600 l-2.500 -1.200 l-2.300 1.200 l.5 -2.600 l-1.900 -1.800 l2.600 -.4 Z" fill="#f7a929"/>
 <path d="M4.500 10 l1 1.800 l2 .3 l-1.500 1.400 l.4 2 l-1.900 -1 l-1.800 1 l.4 -2 l-1.500 -1.400 l2 -.3 Z" fill="#f05fb4"/>
 <path d="M23 11.500 l.9 1.600 l1.800 .3 l-1.300 1.300 l.3 1.800 l-1.700 -.9 l-1.600 .9 l.3 -1.800 l-1.300 -1.300 l1.800 -.3 Z" fill="#e0604a"/>
</svg>
<!-- gallery -->
<svg class="a" style="left:797px;top:266px" width="27" height="28" viewBox="0 0 27 28">
 <ellipse cx="14" cy="25.5" rx="10" ry="2" fill="url(#sh1)"/>
 <g transform="rotate(-24 13 12)">
  <rect x="3" y="5" width="20" height="15" fill="#fff" stroke="#c8c8c8" stroke-width=".7"/>
  <rect x="5" y="7" width="16" height="11" fill="#9fd4f5"/>
  <rect x="5" y="15" width="16" height="3" fill="#62b52a"/>
  <path d="M7 14 L11 9.5 L15 14" fill="none" stroke="#2449a6" stroke-width="1.5"/>
  <rect x="8.6" y="12.5" width="5" height="4" fill="#fff"/>
  <rect x="10.5" y="14" width="1.8" height="2.5" fill="#c0701c"/>
  <rect x="16.5" y="12.5" width="4" height="2.6" fill="#7a3b12"/>
  <rect x="5" y="7" width="5" height="1.5" fill="#7ed321"/>
 </g>
</svg>
<!-- navigator compass -->
<svg class="a" style="left:797px;top:302px" width="27" height="30" viewBox="0 0 27 30">
 <ellipse cx="13" cy="26.5" rx="9" ry="2" fill="url(#sh1)"/>
 <circle cx="13" cy="13" r="9.8" fill="#fff" stroke="#f5a31a" stroke-width="2.4"/>
 <path d="M13 5 V7 M13 19 V21 M5 13 H7 M19 13 H21" stroke="#bbb" stroke-width="1"/>
 <path d="M18.5 7.5 L14.6 14.4 L11.4 11.6 Z" fill="#e0483c"/>
 <path d="M7.5 18.5 L11.4 11.6 L14.6 14.4 Z" fill="#2f86dc"/>
 <circle cx="13" cy="13" r="1.2" fill="#fff"/>
 <text x="13" y="9" font-family="Liberation Sans" font-size="6.5" font-weight="bold" text-anchor="middle" fill="#222">N</text>
</svg>
<!-- splitter grip -->
<svg class="a" style="left:785px;top:370px" width="5" height="38" viewBox="0 0 5 38">
 <path d="M1 1.5 L3.5 3.5 L1 5.5 Z M1 31.5 L3.5 33.5 L1 35.5 Z" fill="#6a6a6a"/>
 <path d="M1.5 10 h2 M1.5 14 h2 M1.5 18 h2 M1.5 22 h2 M1.5 26 h2" stroke="#8a8a8a" stroke-width="1.2"/>
</svg>

<!-- status bar -->
<div id="status" class="a"></div>
<div class="a st" style="left:50px">Страница 1 / 2</div>
<div class="a ss" style="left:148px"></div>
<div class="a st" style="left:154px">Обычный</div>
<div class="a ss" style="left:225px"></div>
<div class="a st" style="left:235px">Русский</div>
<div class="a ss" style="left:292px"></div>
<div class="a st" style="left:297px">ВСТ</div>
<div class="a ss" style="left:327px"></div>
<div class="a st" style="left:329px;width:38px;overflow:hidden">СТАНД</div>
<div class="a ss" style="left:370px"></div>
<div class="a ss" style="left:386px"></div>
<div class="a ss" style="left:415px"></div>
<div class="a ss" style="left:565px"></div>
<div class="a ss" style="left:641px"></div>
<div class="a ss" style="left:784px"></div>
<div class="a st" style="left:789px;transform-origin:0 0;transform:scaleX(.915)">100 %</div>

<svg class="a" style="left:572px;top:632px" width="60" height="13" viewBox="0 0 60 13">
 <defs><linearGradient id="pg" x1="0" y1="0" x2="0" y2="1"><stop offset="0" stop-color="#fff"/><stop offset="1" stop-color="#d6e2f0"/></linearGradient></defs>
 <path d="M1.5 1.5 H7 L9.5 4 V11.5 H1.5 Z" fill="url(#pg)" stroke="#8d8d8d"/><path d="M7 1.5 V4 H9.5" fill="none" stroke="#8d8d8d" stroke-width=".8"/>
 <path d="M16.5 1.5 H22 L24.5 4 V11.5 H16.5 Z" fill="url(#pg)" stroke="#8d8d8d"/><path d="M22 1.5 V4 H24.5" fill="none" stroke="#8d8d8d" stroke-width=".8"/>
 <path d="M26.5 1.5 H32 L34.5 4 V11.5 H26.5 Z" fill="url(#pg)" stroke="#8d8d8d"/><path d="M32 1.5 V4 H34.5" fill="none" stroke="#8d8d8d" stroke-width=".8"/>
 <path d="M41.500 3.5 L43 1.500 H50 V11.5 H41.500 Z" fill="#d4e6f6" stroke="#1d4d80"/>
 <path d="M50 1.500 H56.5 L58.500 3.500 V11.500 H50 Z" fill="#d4e6f6" stroke="#1d4d80"/>
 <path d="M42 3.500 H49.500 M50.500 3.500 H58" stroke="#fff" stroke-width="1" opacity=".7"/>
</svg>
<svg class="a" style="left:646px;top:633px" width="132" height="14" viewBox="0 0 132 14">
 <defs><linearGradient id="zb" x1="0" y1="0" x2="0" y2="1"><stop offset="0" stop-color="#fff"/><stop offset="1" stop-color="#cfd6de"/></linearGradient>
 <radialGradient id="zt" cx=".4" cy=".35"><stop offset="0" stop-color="#a9c7da"/><stop offset="1" stop-color="#4f7f9e"/></radialGradient></defs>
 <circle cx="6.5" cy="6.500" r="5" fill="url(#zb)" stroke="#5a5f66" stroke-width="1.2"/>
 <path d="M3.800 6.500 H9.200" stroke="#1c4da1" stroke-width="1.600"/>
 <path d="M17 5.500 H114" stroke="#9a9a9a" stroke-width="1"/><path d="M17 6.500 H114" stroke="#fff" stroke-width="1"/>
 <path d="M26.500 1 V12" stroke="#8a8a8a" stroke-width="1"/>
 <path d="M65 0.500 V12.500" stroke="#3c5568" stroke-width="1"/>
 <circle cx="65" cy="6.500" r="3.800" fill="url(#zt)" stroke="#2d4558" stroke-width="1"/>
 <circle cx="124.500" cy="6.500" r="5" fill="url(#zb)" stroke="#5a5f66" stroke-width="1.200"/>
 <path d="M121.800 6.500 H127.200 M124.500 3.800 V9.200" stroke="#1c4da1" stroke-width="1.600"/>
</svg>

</body>
</html>
